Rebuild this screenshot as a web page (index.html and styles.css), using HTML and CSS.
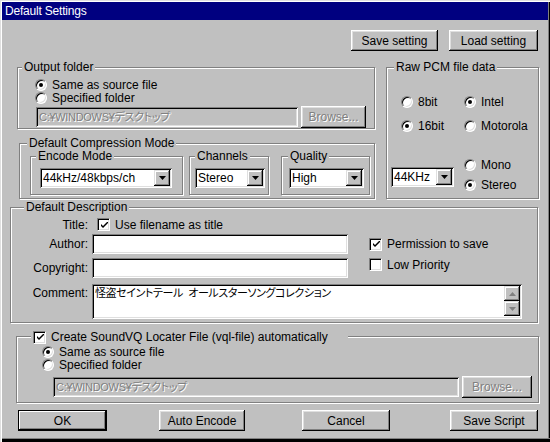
FILE: index.html
```html
<!DOCTYPE html>
<html lang="ja">
<head>
    <meta charset="UTF-8">
    <title>Default Settings</title>
    <link rel="stylesheet" href="styles.css">
</head>
<body>
    <div class="window">
        <div class="titlebar">Default Settings</div>

        <div class="top-buttons">
            <button class="btn btn-save">Save setting</button>
            <button class="btn btn-load">Load setting</button>
        </div>

        <div class="middle">
            <div class="left-col">
                <!-- 出力フォルダ -->
                <div class="group group-output">
                    <div class="group-title">Output folder</div>
                    <div class="opt opt-first"><span class="radio checked"></span>Same as source file</div>
                    <div class="opt"><span class="radio"></span>Specified folder</div>
                    <div class="path-row">
                        <div class="field disabled path-output">C:¥WINDOWS¥デスクトップ</div>
                        <button class="btn disabled browse-output">Browse...</button>
                    </div>
                </div>

                <!-- 圧縮モード -->
                <div class="group group-comp">
                    <div class="group-title">Default Compression Mode</div>
                    <div class="sub-groups">
                        <div class="group sub sub-encode">
                            <div class="group-title">Encode Mode</div>
                            <div class="select sel-encode"><span class="select-text">44kHz/48kbps/ch</span><span class="drop"><svg width="7" height="4" viewBox="0 0 7 4"><path d="M0 0h7L3.5 4z" fill="#000"/></svg></span></div>
                        </div>
                        <div class="group sub sub-channels">
                            <div class="group-title">Channels</div>
                            <div class="select sel-channels"><span class="select-text">Stereo</span><span class="drop"><svg width="7" height="4" viewBox="0 0 7 4"><path d="M0 0h7L3.5 4z" fill="#000"/></svg></span></div>
                        </div>
                        <div class="group sub sub-quality">
                            <div class="group-title">Quality</div>
                            <div class="select sel-quality"><span class="select-text">High</span><span class="drop"><svg width="7" height="4" viewBox="0 0 7 4"><path d="M0 0h7L3.5 4z" fill="#000"/></svg></span></div>
                        </div>
                    </div>
                </div>
            </div>

            <!-- Raw PCM -->
            <div class="group group-pcm">
                <div class="group-title">Raw PCM file data</div>
                <div class="pcm-grid">
                    <div class="opt"><span class="radio"></span>8bit</div>
                    <div class="opt"><span class="radio checked"></span>Intel</div>
                    <div class="opt"><span class="radio checked"></span>16bit</div>
                    <div class="opt"><span class="radio"></span>Motorola</div>
                </div>
                <div class="pcm-bottom">
                    <div class="select sel-rate"><span class="select-text">44KHz</span><span class="drop"><svg width="7" height="4" viewBox="0 0 7 4"><path d="M0 0h7L3.5 4z" fill="#000"/></svg></span></div>
                    <div class="pcm-channels">
                        <div class="opt"><span class="radio"></span>Mono</div>
                        <div class="opt"><span class="radio checked"></span>Stereo</div>
                    </div>
                </div>
            </div>
        </div>

        <!-- 説明 -->
        <div class="group group-desc">
            <div class="group-title">Default Description</div>
            <div class="desc-row row-title">
                <span class="desc-label">Title:</span>
                <span class="check checked"><svg width="7" height="7" viewBox="0 0 7 7"><path d="M0 2l2 2 5-5v2L2 6 0 4z" fill="#000"/></svg></span>Use filename as title
            </div>
            <div class="desc-row row-author">
                <span class="desc-label">Author:</span>
                <div class="field field-desc"></div>
                <div class="opt opt-perm"><span class="check checked"><svg width="7" height="7" viewBox="0 0 7 7"><path d="M0 2l2 2 5-5v2L2 6 0 4z" fill="#000"/></svg></span>Permission to save</div>
            </div>
            <div class="desc-row row-copy">
                <span class="desc-label">Copyright:</span>
                <div class="field field-desc"></div>
                <div class="opt opt-low"><span class="check"></span>Low Priority</div>
            </div>
            <div class="desc-row row-comment">
                <span class="desc-label label-comment">Comment:</span>
                <div class="field memo">
                    <span class="memo-text">怪盗セイントテール&nbsp;&nbsp;オールスターソングコレクション</span>
                    <div class="memo-scroll">
                        <span class="scroll-btn"><svg width="7" height="4" viewBox="0 0 7 4"><path d="M0 4h7L3.5 0z" fill="#808080"/></svg></span>
                        <span class="scroll-btn"><svg width="7" height="4" viewBox="0 0 7 4"><path d="M0 0h7L3.5 4z" fill="#808080"/></svg></span>
                    </div>
                </div>
            </div>
        </div>

        <!-- vqlファイル -->
        <div class="group group-vql">
            <div class="group-title vql-title"><span class="check checked"><svg width="7" height="7" viewBox="0 0 7 7"><path d="M0 2l2 2 5-5v2L2 6 0 4z" fill="#000"/></svg></span>Create SoundVQ Locater File (vql-file) automatically</div>
            <div class="opt opt-vql-first"><span class="radio checked"></span>Same as source file</div>
            <div class="opt"><span class="radio"></span>Specified folder</div>
            <div class="path-row path-row-vql">
                <div class="field disabled path-vql">C:¥WINDOWS¥デスクトップ</div>
                <button class="btn disabled browse-vql">Browse...</button>
            </div>
        </div>

        <div class="bottom-buttons">
            <button class="btn btn-default btn-ok">OK</button>
            <button class="btn btn-auto">Auto Encode</button>
            <button class="btn btn-cancel">Cancel</button>
            <button class="btn btn-script">Save Script</button>
        </div>
    </div>
</body>
</html>
```

FILE: styles.css
```css
body {
    margin: 0;
    font-family: "Liberation Sans", "Noto Sans CJK JP", sans-serif;
    font-size: 12px;
    color: #000;
    background-color: #c0c0c0;
}
.window {
    width: 550px;
    height: 442px;
    box-sizing: border-box;
    padding: 2px 2px 4px 2px;
    background-color: #c0c0c0;
    box-shadow: inset 1px 1px #dfdfdf, inset 2px 2px #fff, inset 0 -3px #000, inset 0 -4px #808080, inset -1px 0 #000, inset -2px 0 #808080;
    overflow: hidden;
}
.titlebar {
    height: 18px;
    line-height: 18px;
    padding-left: 3px;
    letter-spacing: -0.2px;
    background-color: #000080;
    color: #fff;
}

/* ボタン */
.btn {
    font: inherit;
    height: 21px;
    padding: 0;
    border: none;
    background-color: #c0c0c0;
    color: #000;
    box-shadow: inset -1px -1px #000, inset 1px 1px #fff, inset -2px -2px #808080, inset 2px 2px #dfdfdf;
}
.btn.disabled {
    color: #808080;
    text-shadow: 1px 1px #fff;
}
.btn-default {
    box-shadow: inset 0 0 0 1px #000, inset -2px -2px #000, inset 2px 2px #fff, inset -3px -3px #808080;
}
.top-buttons {
    display: flex;
    justify-content: flex-end;
    gap: 11px;
    margin-top: 10px;
    padding-right: 10px;
}
.btn-save { width: 87px; }
.btn-load { width: 89px; }

/* グループ枠 */
.group {
    box-sizing: border-box;
    border: 1px solid #808080;
    box-shadow: inset 1px 1px #fff, 1px 1px #fff;
}
.group-title {
    display: table;
    height: 13px;
    line-height: 13px;
    margin: -7px 0 0 7px;
    padding: 0 2px;
    background-color: #c0c0c0;
}

/* ラジオ・チェック */
.opt {
    display: flex;
    align-items: center;
    height: 13px;
    white-space: nowrap;
}
.radio {
    display: flex;
    align-items: center;
    justify-content: center;
    flex: none;
    width: 12px;
    height: 12px;
    box-sizing: border-box;
    margin-right: 5px;
    border-radius: 50%;
    border: 1px solid;
    border-color: #808080 #fff #fff #808080;
    background-color: #fff;
    box-shadow: inset 1px 1px #000, inset -1px -1px #dfdfdf;
}
.radio.checked::after {
    content: "";
    width: 4px;
    height: 4px;
    border-radius: 50%;
    background-color: #000;
}
.check {
    display: flex;
    align-items: center;
    justify-content: center;
    flex: none;
    width: 13px;
    height: 13px;
    box-sizing: border-box;
    margin-right: 5px;
    border: 1px solid;
    border-color: #808080 #fff #fff #808080;
    background-color: #fff;
    box-shadow: inset 1px 1px #000, inset -1px -1px #dfdfdf;
}
.check svg {
    margin: 1px 0 0 1px;
}

/* 入力欄 */
.field {
    height: 20px;
    box-sizing: border-box;
    padding: 0 3px;
    line-height: 20px;
    background-color: #fff;
    box-shadow: inset 1px 1px #808080, inset -1px -1px #fff, inset 2px 2px #000, inset -2px -2px #dfdfdf;
    white-space: nowrap;
    overflow: hidden;
}
.field.disabled {
    background-color: #c0c0c0;
    color: #808080;
    text-shadow: 1px 1px #fff;
    font-size: 11px;
    letter-spacing: -0.3px;
    font-feature-settings: "palt";
}
.select {
    display: flex;
    align-items: center;
    height: 20px;
    box-sizing: border-box;
    padding: 2px;
    background-color: #fff;
    box-shadow: inset 1px 1px #808080, inset -1px -1px #fff, inset 2px 2px #000, inset -2px -2px #dfdfdf;
}
.select-text {
    flex: 1;
    padding-left: 1px;
    white-space: nowrap;
}
.drop, .scroll-btn {
    display: flex;
    align-items: center;
    justify-content: center;
    width: 16px;
    height: 16px;
    flex: none;
    background-color: #c0c0c0;
    box-shadow: inset -1px -1px #000, inset 1px 1px #dfdfdf, inset -2px -2px #808080, inset 2px 2px #fff;
}

/* 中段 */
.middle {
    display: flex;
    margin-top: 16px;
    padding-left: 15px;
}
.left-col {
    width: 358px;
}
.group-output {
    height: 62px;
    padding-left: 17px;
}
.group-output .group-title {
    margin-left: -13px;
}
.opt-first {
    margin-top: 4px;
}
.path-row {
    display: flex;
    align-items: center;
    margin-top: 2px;
}
.path-output {
    width: 262px;
    margin-left: 1px;
}
.browse-output {
    width: 65px;
    height: 22px;
    margin-left: 3px;
}
.group-comp {
    width: 356px;
    height: 56px;
    margin: 14px 0 0 2px;
}
.sub-groups {
    display: flex;
    margin-top: 6px;
    padding-left: 10px;
}
.sub {
    height: 39px;
}
.sub .select {
    margin-top: 5px;
}
.sub-encode {
    width: 153px;
    padding-left: 9px;
}
.sub-encode .group-title { margin-left: -4px; }
.sel-encode { width: 132px; }
.sub-channels {
    width: 80px;
    margin-left: 6px;
    padding-left: 5px;
}
.sub-channels .group-title { margin-left: 0; }
.sel-channels { width: 70px; }
.sub-quality {
    width: 89px;
    margin-left: 12px;
    padding-left: 7px;
}
.sub-quality .group-title { margin-left: -1px; }
.sel-quality { width: 75px; }

.group-pcm {
    width: 153px;
    height: 132px;
    margin-left: 11px;
    padding-left: 14px;
}
.group-pcm .group-title {
    margin-left: -7px;
}
.pcm-grid {
    display: grid;
    grid-template-columns: 63px auto;
    row-gap: 11px;
    margin-top: 21px;
}
.pcm-bottom {
    display: flex;
    margin-top: 26px;
}
.sel-rate {
    width: 63px;
    margin: 9px 0 0 -10px;
}
.pcm-channels {
    display: flex;
    flex-direction: column;
    gap: 7px;
    margin-left: 10px;
}

/* 説明 */
.group-desc {
    width: 528px;
    height: 116px;
    margin: 8px 0 0 8px;
}
.group-desc .group-title {
    margin-left: 13px;
}
.desc-row {
    display: flex;
    align-items: center;
}
.desc-label {
    width: 77px;
    margin-right: 4px;
    text-align: right;
    flex: none;
}
.row-title {
    height: 13px;
    margin-top: 4px;
}
.row-title .check {
    margin-left: 5px;
}
.row-author {
    margin-top: 3px;
}
.row-copy {
    margin-top: 4px;
    align-items: flex-start;
}
.row-copy .desc-label {
    line-height: 20px;
}
.field-desc {
    width: 256px;
}
.opt-perm, .opt-low {
    margin-left: 21px;
}
.row-comment {
    margin-top: 6px;
    align-items: flex-start;
}
.label-comment {
    margin-top: 2px;
}
.memo {
    display: flex;
    width: 430px;
    height: 35px;
    padding: 2px 2px 2px 3px;
    line-height: 14px;
}
.memo-text {
    flex: 1;
    font-size: 11px;
    letter-spacing: -0.4px;
    font-feature-settings: "palt";
}
.memo-scroll {
    display: flex;
    flex-direction: column;
}
.scroll-btn {
    height: 15px;
}

/* vqlファイル */
.group-vql {
    width: 523px;
    height: 67px;
    margin: 13px 0 0 14px;
    padding-left: 25px;
}
.vql-title {
    display: flex;
    align-items: center;
    width: max-content;
    height: 14px;
    line-height: 14px;
    margin: -7px 0 0 -11px;
    padding-right: 20px;
}
.opt-vql-first {
    margin-top: 1px;
}
.path-row-vql {
    margin-top: 5px;
}
.path-vql {
    width: 406px;
    margin-left: 11px;
}
.browse-vql {
    width: 70px;
    height: 22px;
    margin-left: 3px;
}

/* 下段ボタン */
.bottom-buttons {
    display: flex;
    margin-top: 7px;
    padding-left: 16px;
}
.btn-ok { width: 89px; }
.btn-auto { width: 86px; margin-left: 52px; }
.btn-cancel { width: 88px; margin-left: 57px; }
.btn-script { width: 88px; margin-left: 60px; }
```
